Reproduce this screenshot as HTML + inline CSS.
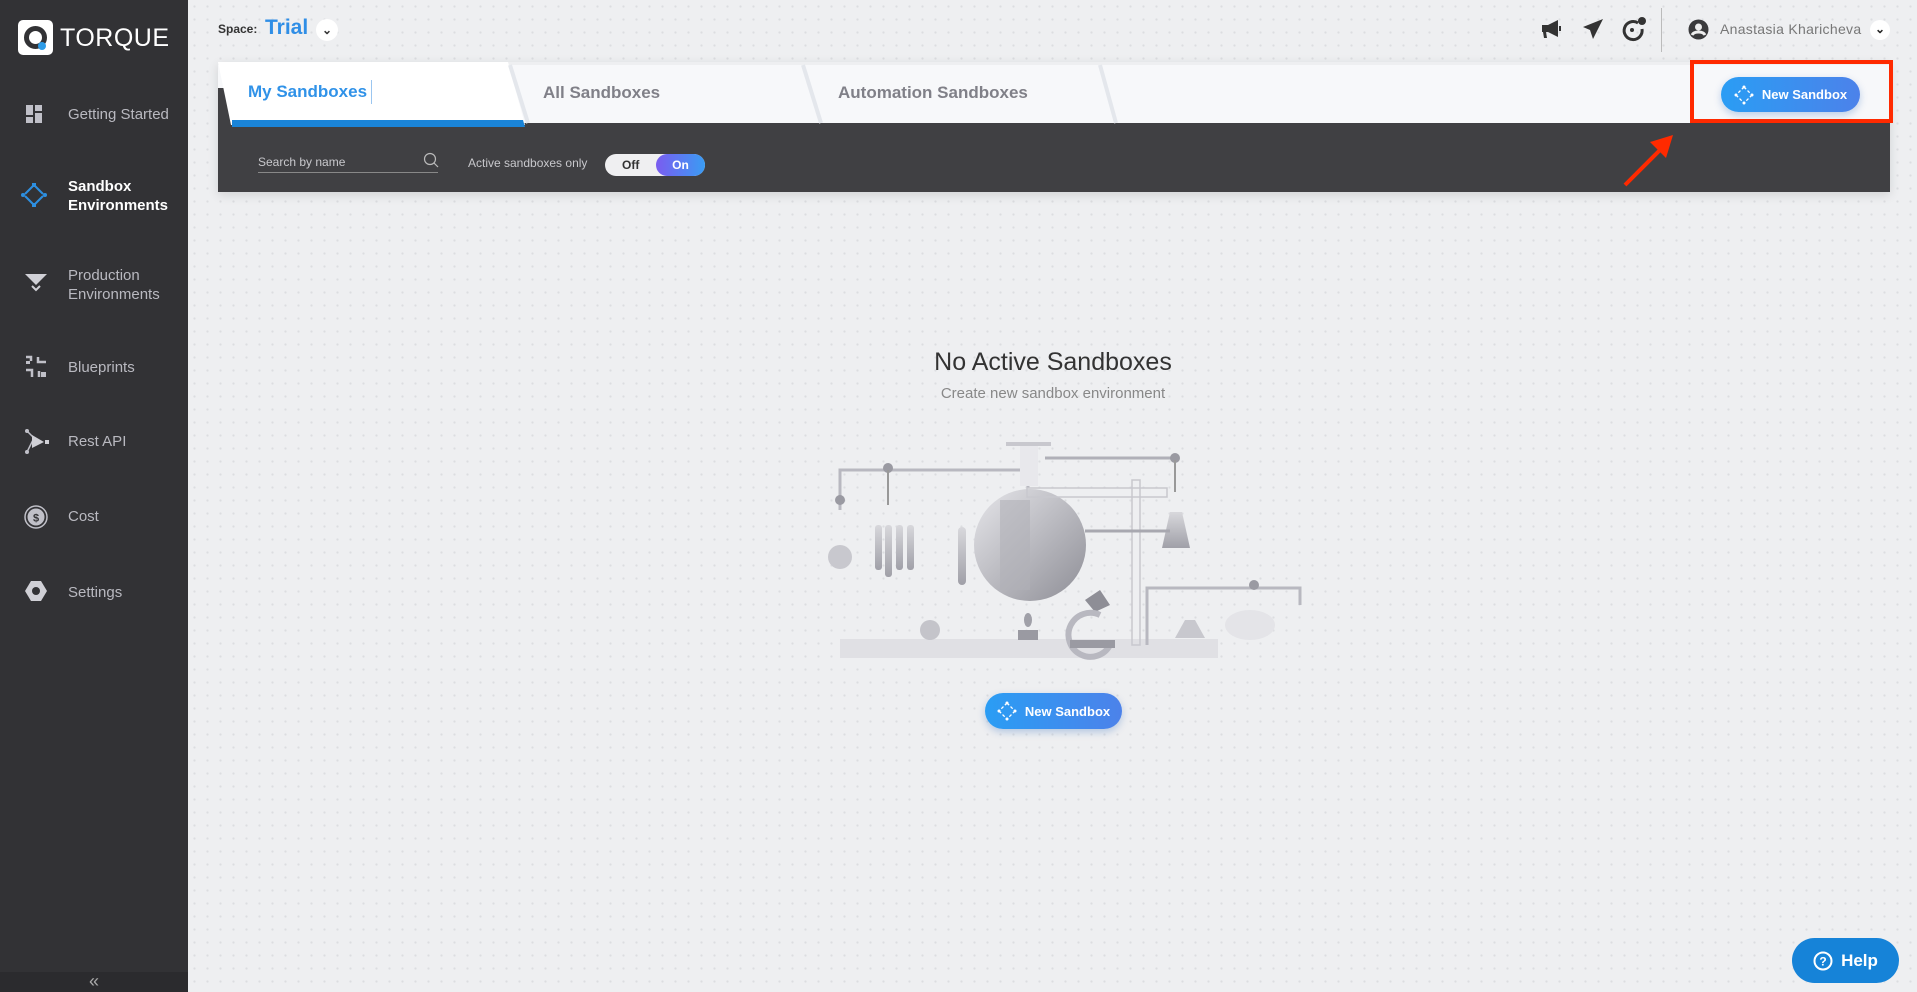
<!DOCTYPE html>
<html><head><meta charset="utf-8">
<style>
*{margin:0;padding:0;box-sizing:border-box}
body{width:1917px;height:992px;overflow:hidden;font-family:"Liberation Sans",sans-serif;background:#ededef;position:relative}
.main{position:absolute;left:188px;top:0;right:0;bottom:0;background-color:#eeeff1;background-image:radial-gradient(#dcdde0 1px,transparent 1.3px);background-size:13px 13px}
.side{position:absolute;left:0;top:0;width:188px;height:992px;background:#323235}
.side .bot{position:absolute;left:0;bottom:0;width:188px;height:20px;background:#2b2b2e;color:#aaa;text-align:center;font-size:18px;line-height:18px}
.nav{position:absolute;left:68px;color:#b9b9c0;font-size:15px;line-height:19px}
.ic{position:absolute;left:24px}
.abs{position:absolute}
.btn{position:absolute;border-radius:20px;background:linear-gradient(90deg,#2a9df4,#4c82ea);color:#fff;font-size:13px;font-weight:bold;display:flex;align-items:center;justify-content:center;gap:8px;box-shadow:0 3px 8px rgba(0,80,180,.25)}
</style></head><body>
<div class="main"></div>
<div class="side">
  <div class="abs" style="left:18px;top:20px;width:35px;height:35px;background:#fff;border-radius:5px"></div>
  <div class="abs" style="left:24px;top:26px;width:23px;height:23px;border:5px solid #323235;border-radius:50%"></div>
  <div class="abs" style="left:38px;top:42px;width:8px;height:8px;background:#2d9be6;border-radius:50%"></div>
  <div class="abs" style="left:60px;top:22px;color:#fff;font-size:25px;letter-spacing:0.5px;line-height:32px">TORQUE</div>

  <svg class="ic" style="top:104px" width="20" height="20"><rect x="2" y="1" width="7" height="10" fill="#c0c0c8"/><rect x="11" y="1" width="7" height="6" fill="#c0c0c8"/><rect x="2" y="13" width="7" height="6" fill="#c0c0c8"/><rect x="11" y="9" width="7" height="10" fill="#c0c0c8"/></svg>
  <div class="nav" style="top:105px">Getting Started</div>

  <svg class="ic" style="top:181px;left:20px" width="28" height="28"><g stroke="#2d8fe0" stroke-width="2" fill="#2d8fe0"><line x1="14" y1="4" x2="5" y2="13"/><line x1="14" y1="4" x2="23" y2="13"/><line x1="5" y1="15" x2="13" y2="23"/><line x1="23" y1="15" x2="15" y2="23"/></g><g fill="#2d8fe0"><rect x="12" y="2" width="4" height="4"/><circle cx="3" cy="14" r="2"/><circle cx="25" cy="14" r="2"/><rect x="12" y="22" width="4" height="4"/></g></svg>
  <div class="nav" style="top:177px;color:#fff;font-weight:bold">Sandbox<br>Environments</div>

  <svg class="ic" style="top:272px" width="24" height="24"><path d="M1 2H23L12 13Z" fill="#d0d0d6"/><path d="M8 14L12 18L16 14" stroke="#d0d0d6" stroke-width="2" fill="none"/></svg>
  <div class="nav" style="top:266px">Production<br>Environments</div>

  <svg class="ic" style="top:355px" width="24" height="24"><g stroke="#c0c0c8" stroke-width="2.5" fill="none"><path d="M2 2H7V6"/><path d="M14 2V7H22"/><path d="M2 15H8V22"/><path d="M15 22V16"/></g><rect x="17" y="17" width="5" height="5" fill="#c0c0c8"/><rect x="2" y="6" width="4" height="3" fill="#c0c0c8"/></svg>
  <div class="nav" style="top:358px">Blueprints</div>

  <svg class="ic" style="top:429px" width="26" height="26"><path d="M3 2L10 9L3 23" stroke="#c0c0c8" stroke-width="1.5" fill="none"/><circle cx="3" cy="2" r="2" fill="#c0c0c8"/><circle cx="3" cy="23" r="2" fill="#c0c0c8"/><path d="M8 6L20 13L8 19Z" fill="#d0d0d6"/><rect x="21" y="11" width="4" height="4" fill="#d0d0d6"/></svg>
  <div class="nav" style="top:432px">Rest API</div>

  <svg class="ic" style="top:505px" width="25" height="25"><circle cx="12" cy="12" r="11" stroke="#c0c0c8" stroke-width="1.5" fill="none"/><circle cx="12" cy="12" r="8.5" fill="#c0c0c8"/><text x="12" y="16.5" font-size="11" font-weight="bold" text-anchor="middle" fill="#323235" font-family="Liberation Sans">$</text></svg>
  <div class="nav" style="top:507px">Cost</div>

  <svg class="ic" style="top:579px" width="25" height="25"><path d="M7 2H17L23 12L17 22H7L1 12Z" fill="#d0d0d6"/><circle cx="12" cy="12" r="4" fill="#323235"/></svg>
  <div class="nav" style="top:583px">Settings</div>
  <div class="bot">«</div>
</div>

<!-- header -->
<div class="abs" style="left:218px;top:22px;font-size:12px;color:#333;font-weight:bold">Space:</div>
<div class="abs" style="left:265px;top:16px;font-size:21px;color:#2f8ee6;font-weight:bold">Trial</div>
<div class="abs" style="left:316px;top:19px;width:22px;height:22px;border-radius:50%;background:#fff;text-align:center;font-size:12px;line-height:22px;color:#333;font-weight:bold">⌄</div>

<svg class="abs" style="left:1540px;top:18px" width="22" height="22"><path d="M2 7H8L18 2V19L8 14H6L7 20H4L3 14H2Z" fill="#333"/><rect x="19" y="8" width="2" height="5" fill="#333"/></svg>
<svg class="abs" style="left:1582px;top:18px" width="22" height="22"><path d="M21 1L1 9L8 12L11 21Z" fill="#333"/></svg>
<svg class="abs" style="left:1621px;top:16px" width="26" height="26"><path d="M17 7A9 9 0 1 0 21 13" stroke="#333" stroke-width="3" fill="none"/><circle cx="11" cy="14" r="2" fill="#333"/><circle cx="21" cy="5" r="4" fill="#333"/></svg>
<div class="abs" style="left:1661px;top:8px;width:1px;height:44px;background:#bbb"></div>
<svg class="abs" style="left:1688px;top:19px" width="21" height="21"><circle cx="10.5" cy="10.5" r="10" fill="#3a3a3c"/><circle cx="10.5" cy="8" r="3.5" fill="#eee"/><path d="M4 16C6 12 15 12 17 16" stroke="#eee" stroke-width="3" fill="none"/></svg>
<div class="abs" style="left:1720px;top:21px;font-size:14px;color:#777;letter-spacing:.3px">Anastasia Kharicheva</div>
<div class="abs" style="left:1870px;top:20px;width:20px;height:20px;border-radius:50%;background:#fff;text-align:center;font-size:12px;line-height:18px;color:#222;font-weight:bold">⌄</div>

<!-- panel -->
<div class="abs" style="left:218px;top:62px;width:1672px;height:130px;box-shadow:0 3px 10px rgba(0,0,0,.12)">
  <div class="abs" style="left:0;top:3px;width:1672px;height:58px;background:#f7f8fa"></div>
  <div class="abs" style="left:0;top:26px;width:40px;height:40px;background:#404043"></div>
  <div class="abs" style="left:0;top:61px;width:1672px;height:69px;background:#404043"></div>
  <svg class="abs" style="left:0;top:0" width="1672" height="66">
    <path d="M0 0H290L307 63H13Z" fill="#fff"/>
    <path d="M14 58H305L307 65H14Z" fill="#1a84d8"/>
    <path d="M292 3L310 61" stroke="#e4e7ec" stroke-width="4"/>
    <path d="M585 3L603 61" stroke="#e4e7ec" stroke-width="4"/>
    <path d="M882 3L898 61" stroke="#e4e7ec" stroke-width="4"/>
  </svg>
  <div class="abs" style="left:30px;top:20px;font-size:17px;color:#3092e8;font-weight:bold">My Sandboxes</div>
  <div class="abs" style="left:153px;top:18px;width:1px;height:24px;background:#9bc6f0"></div>
  <div class="abs" style="left:325px;top:21px;font-size:17px;color:#808088;font-weight:bold">All Sandboxes</div>
  <div class="abs" style="left:620px;top:21px;font-size:17px;color:#808088;font-weight:bold">Automation Sandboxes</div>
  <div class="abs" style="left:40px;top:93px;font-size:12px;color:#c8c8cc">Search by name</div>
  <svg class="abs" style="left:205px;top:90px" width="16" height="16"><circle cx="7" cy="7" r="5.5" stroke="#bbb" stroke-width="1.2" fill="none"/><line x1="11" y1="11" x2="15" y2="15" stroke="#bbb" stroke-width="1.2"/></svg>
  <div class="abs" style="left:40px;top:110px;width:180px;height:1px;background:#888"></div>
  <div class="abs" style="left:250px;top:94px;font-size:12px;color:#c8c8cc">Active sandboxes only</div>
  <div class="abs" style="left:387px;top:92px;width:100px;height:22px;border-radius:11px;background:#efeff1"></div>
  <div class="abs" style="left:404px;top:96px;font-size:12px;color:#333;font-weight:bold">Off</div>
  <div class="abs" style="left:438px;top:92px;width:49px;height:22px;border-radius:11px;background:linear-gradient(90deg,#7a5cf0,#3a9cf3);color:#fff;font-size:12px;font-weight:bold;text-align:center;line-height:22px">On</div>
</div>

<!-- top right button + annotation -->
<div class="abs" style="left:1690px;top:60px;width:203px;height:63px;border:4px solid #ff2a00"></div>
<div class="btn" style="left:1721px;top:77px;width:139px;height:35px">
<svg width="20" height="20"><g stroke="#fff" stroke-width="1.3" fill="#fff"><line x1="10" y1="2" x2="2" y2="10" stroke-dasharray="3 2"/><line x1="10" y1="2" x2="18" y2="10" stroke-dasharray="3 2"/><line x1="2" y1="10" x2="10" y2="18" stroke-dasharray="3 2"/><line x1="18" y1="10" x2="10" y2="18" stroke-dasharray="3 2"/></g><g fill="#fff"><circle cx="10" cy="2" r="1.5"/><circle cx="2" cy="10" r="1.5"/><circle cx="18" cy="10" r="1.5"/><circle cx="10" cy="18" r="1.5"/></g></svg>New Sandbox</div>
<svg class="abs" style="left:1620px;top:130px" width="60" height="60"><line x1="5" y1="55" x2="45" y2="15" stroke="#ff2a00" stroke-width="4"/><path d="M53 5L30 12L46 28Z" fill="#ff2a00"/></svg>

<!-- empty state -->
<div class="abs" style="left:800px;top:348px;width:506px;text-align:center;font-size:25px;color:#333">No Active Sandboxes</div>
<div class="abs" style="left:800px;top:385px;width:506px;text-align:center;font-size:15px;color:#888">Create new sandbox environment</div>

<svg class="abs" style="left:800px;top:430px" width="510" height="240">
<defs><linearGradient id="g" x1="0" y1="0" x2="1" y2="1"><stop offset="0" stop-color="#e6e6ea"/><stop offset="1" stop-color="#8e8e96"/></linearGradient>
<linearGradient id="v" x1="0" y1="0" x2="0" y2="1"><stop offset="0" stop-color="#d8d8dc"/><stop offset="1" stop-color="#a0a0a8"/></linearGradient></defs>
<rect x="40" y="209" width="378" height="19" fill="#e0e0e4"/>
<path d="M40 80V40H228V58" stroke="#b8b8c0" stroke-width="3" fill="none"/>
<circle cx="88" cy="38" r="5" fill="#9a9aa2"/><circle cx="40" cy="70" r="5" fill="#9a9aa2"/>
<line x1="88" y1="40" x2="88" y2="75" stroke="#999" stroke-width="2"/>
<rect x="206" y="12" width="45" height="4" fill="#c8c8ce"/>
<rect x="220" y="16" width="18" height="40" fill="#e8e8ec"/>
<line x1="245" y1="28" x2="375" y2="28" stroke="#b0b0b8" stroke-width="3"/>
<circle cx="375" cy="28" r="5" fill="#9a9aa2"/>
<line x1="375" y1="30" x2="375" y2="62" stroke="#999" stroke-width="2"/>
<path d="M370 82H382L390 118H362Z" fill="url(#v)"/>
<rect x="75" y="95" width="7" height="45" rx="3" fill="url(#v)"/><rect x="85" y="95" width="7" height="52" rx="3" fill="url(#v)"/><rect x="96" y="95" width="7" height="45" rx="3" fill="url(#v)"/><rect x="107" y="95" width="7" height="45" rx="3" fill="url(#v)"/>
<rect x="158" y="97" width="8" height="58" rx="4" fill="url(#v)"/>
<circle cx="230" cy="115" r="56" fill="url(#g)"/>
<rect x="200" y="70" width="30" height="90" fill="#b0b0b8" opacity=".6"/>
<rect x="227" y="58" width="140" height="9" fill="none" stroke="#c8c8ce" stroke-width="1.5"/>
<rect x="332" y="50" width="8" height="165" fill="none" stroke="#c8c8ce" stroke-width="1.5"/>
<line x1="285" y1="101" x2="370" y2="101" stroke="#a8a8b0" stroke-width="3"/>
<path d="M347 215V158H500V175" stroke="#b8b8c0" stroke-width="3" fill="none"/>
<circle cx="454" cy="155" r="5" fill="#9a9aa2"/>
<ellipse cx="40" cy="127" rx="12" ry="12" fill="#c8c8ce"/>
<circle cx="130" cy="200" r="10" fill="#c4c4ca"/>
<ellipse cx="450" cy="195" rx="25" ry="15" fill="#e4e4e8"/>
<path d="M285 170L300 160L310 175L295 182Z" fill="#8e8e96"/>
<path d="M300 185A22 22 0 1 0 310 215" stroke="#b8b8c0" stroke-width="6" fill="none"/>
<rect x="270" y="210" width="45" height="8" fill="#9a9aa2"/>
<rect x="218" y="200" width="20" height="10" fill="#9a9aa2"/>
<ellipse cx="228" cy="190" rx="4" ry="7" fill="#a0a0a8"/>
<path d="M385 190L395 190L405 208H375Z" fill="#c8c8ce"/>
</svg>

<div class="btn" style="left:985px;top:693px;width:137px;height:36px">
<svg width="20" height="20"><g stroke="#fff" stroke-width="1.3"><line x1="10" y1="2" x2="2" y2="10" stroke-dasharray="3 2"/><line x1="10" y1="2" x2="18" y2="10" stroke-dasharray="3 2"/><line x1="2" y1="10" x2="10" y2="18" stroke-dasharray="3 2"/><line x1="18" y1="10" x2="10" y2="18" stroke-dasharray="3 2"/></g><g fill="#fff"><circle cx="10" cy="2" r="1.5"/><circle cx="2" cy="10" r="1.5"/><circle cx="18" cy="10" r="1.5"/><circle cx="10" cy="18" r="1.5"/></g></svg>New Sandbox</div>

<div class="abs" style="left:1792px;top:938px;width:107px;height:45px;border-radius:23px;background:#1683d8;color:#fff;font-size:17px;font-weight:bold;display:flex;align-items:center;justify-content:center;gap:8px">
<svg width="20" height="20"><circle cx="10" cy="10" r="8.5" stroke="#fff" stroke-width="2" fill="none"/><text x="10" y="14.5" font-size="12" font-weight="bold" fill="#fff" text-anchor="middle" font-family="Liberation Sans">?</text></svg>Help</div>
</body></html>
